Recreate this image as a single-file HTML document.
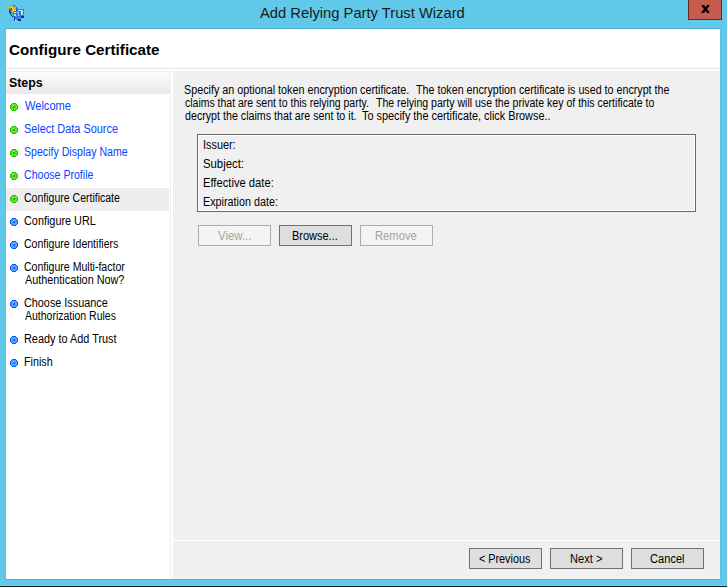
<!DOCTYPE html>
<html><head><meta charset="utf-8">
<style>
*{margin:0;padding:0;box-sizing:border-box}
html,body{width:727px;height:587px;overflow:hidden}
body{position:relative;background:#60c9ea;font-family:"Liberation Sans",sans-serif;font-size:12px;line-height:13px;color:#000}
.a{position:absolute}
.t{position:absolute;white-space:pre;transform-origin:0 0;font-size:12px;line-height:13px}
#title{font-size:15px;line-height:18px;color:#1a1a1a}
#close{left:688px;top:0;width:34px;height:20px;background:#c55c4e;border:1px solid #5e2c25;border-top:none}
#fr_t{left:5px;top:28px;width:716px;height:1px;background:#54b3d4}
#fr_l{left:5px;top:29px;width:1px;height:550px;background:#5bc0e1}
#fr_r{left:720px;top:29px;width:1px;height:550px;background:#5bc0e1}
#fr_b{left:5px;top:579px;width:716px;height:1px;background:#54b3d4}
#client{left:6px;top:29px;width:714px;height:550px;background:#fff}
#hdr{font-size:15px;line-height:18px;font-weight:bold}
#sep{left:6px;top:68px;width:714px;height:1px;background:#e6e6e6}
#steps{left:6px;top:71px;width:165px;height:508px;background:#fff;border-top:1px solid #f0f0f0;border-right:1px solid #efefef}
#stepshdr{left:6px;top:72px;width:164px;height:22px;background:linear-gradient(#fbfbfb,#e9e9e9)}
#stepst{font-size:12.5px;line-height:14px;font-weight:bold}
#content{left:173px;top:71px;width:547px;height:508px;background:#f0f0f0}
#btnsep{left:173px;top:540px;width:547px;height:1px;background:#fff}
.sel{left:6px;top:188px;width:163px;height:23px;background:#eeeeee}
.dot{position:absolute;left:10px;width:8px;height:8px}
.done{color:#0645ff}
#box{left:197px;top:134px;width:499px;height:78px;border:1px solid #6a6a6a;box-shadow:inset 1px 1px 0 #fff,inset -1px -1px 0 #fff;background:#f0f0f0}
.btn{position:absolute;height:21px;width:73px;border:1px solid #707070;background:#dedede}
.dis{border-color:#adadad;background:#f4f4f4}
.dist{color:#a3a3a3}
.foc{border-color:#3c7fb1}
</style></head><body>
<svg width="0" height="0" style="position:absolute"><defs><symbol id="bb" viewBox="0 0 8 8"><rect x="2" y="0" width="1" height="1" fill="#0a58ff"/><rect x="3" y="0" width="1" height="1" fill="#0a58ff"/><rect x="4" y="0" width="1" height="1" fill="#0a58ff"/><rect x="5" y="0" width="1" height="1" fill="#0a58ff"/><rect x="1" y="1" width="1" height="1" fill="#0a58ff"/><rect x="2" y="1" width="1" height="1" fill="#5a9bff"/><rect x="3" y="1" width="1" height="1" fill="#5a9bff"/><rect x="4" y="1" width="1" height="1" fill="#5a9bff"/><rect x="5" y="1" width="1" height="1" fill="#5a9bff"/><rect x="6" y="1" width="1" height="1" fill="#0a58ff"/><rect x="0" y="2" width="1" height="1" fill="#0a58ff"/><rect x="1" y="2" width="1" height="1" fill="#5a9bff"/><rect x="2" y="2" width="1" height="1" fill="#5a9bff"/><rect x="3" y="2" width="1" height="1" fill="#b4d2ff"/><rect x="4" y="2" width="1" height="1" fill="#5a9bff"/><rect x="5" y="2" width="1" height="1" fill="#5a9bff"/><rect x="6" y="2" width="1" height="1" fill="#5a9bff"/><rect x="7" y="2" width="1" height="1" fill="#0a58ff"/><rect x="0" y="3" width="1" height="1" fill="#0a58ff"/><rect x="1" y="3" width="1" height="1" fill="#5a9bff"/><rect x="2" y="3" width="1" height="1" fill="#5a9bff"/><rect x="3" y="3" width="1" height="1" fill="#1a6cff"/><rect x="4" y="3" width="1" height="1" fill="#1a6cff"/><rect x="5" y="3" width="1" height="1" fill="#5a9bff"/><rect x="6" y="3" width="1" height="1" fill="#5a9bff"/><rect x="7" y="3" width="1" height="1" fill="#0a58ff"/><rect x="0" y="4" width="1" height="1" fill="#0a58ff"/><rect x="1" y="4" width="1" height="1" fill="#5a9bff"/><rect x="2" y="4" width="1" height="1" fill="#5a9bff"/><rect x="3" y="4" width="1" height="1" fill="#1a6cff"/><rect x="4" y="4" width="1" height="1" fill="#1a6cff"/><rect x="5" y="4" width="1" height="1" fill="#5a9bff"/><rect x="6" y="4" width="1" height="1" fill="#5a9bff"/><rect x="7" y="4" width="1" height="1" fill="#0a58ff"/><rect x="0" y="5" width="1" height="1" fill="#0a58ff"/><rect x="1" y="5" width="1" height="1" fill="#5a9bff"/><rect x="2" y="5" width="1" height="1" fill="#5a9bff"/><rect x="3" y="5" width="1" height="1" fill="#5a9bff"/><rect x="4" y="5" width="1" height="1" fill="#5a9bff"/><rect x="5" y="5" width="1" height="1" fill="#5a9bff"/><rect x="6" y="5" width="1" height="1" fill="#5a9bff"/><rect x="7" y="5" width="1" height="1" fill="#0a58ff"/><rect x="1" y="6" width="1" height="1" fill="#0a58ff"/><rect x="2" y="6" width="1" height="1" fill="#5a9bff"/><rect x="3" y="6" width="1" height="1" fill="#5a9bff"/><rect x="4" y="6" width="1" height="1" fill="#5a9bff"/><rect x="5" y="6" width="1" height="1" fill="#5a9bff"/><rect x="6" y="6" width="1" height="1" fill="#0a58ff"/><rect x="2" y="7" width="1" height="1" fill="#0a58ff"/><rect x="3" y="7" width="1" height="1" fill="#0a58ff"/><rect x="4" y="7" width="1" height="1" fill="#0a58ff"/><rect x="5" y="7" width="1" height="1" fill="#0a58ff"/></symbol><symbol id="bg" viewBox="0 0 8 8"><rect x="2" y="0" width="1" height="1" fill="#22c300"/><rect x="3" y="0" width="1" height="1" fill="#22c300"/><rect x="4" y="0" width="1" height="1" fill="#22c300"/><rect x="5" y="0" width="1" height="1" fill="#22c300"/><rect x="1" y="1" width="1" height="1" fill="#22c300"/><rect x="2" y="1" width="1" height="1" fill="#62dc30"/><rect x="3" y="1" width="1" height="1" fill="#62dc30"/><rect x="4" y="1" width="1" height="1" fill="#62dc30"/><rect x="5" y="1" width="1" height="1" fill="#62dc30"/><rect x="6" y="1" width="1" height="1" fill="#22c300"/><rect x="0" y="2" width="1" height="1" fill="#22c300"/><rect x="1" y="2" width="1" height="1" fill="#62dc30"/><rect x="2" y="2" width="1" height="1" fill="#62dc30"/><rect x="3" y="2" width="1" height="1" fill="#cfe8c8"/><rect x="4" y="2" width="1" height="1" fill="#62dc30"/><rect x="5" y="2" width="1" height="1" fill="#62dc30"/><rect x="6" y="2" width="1" height="1" fill="#62dc30"/><rect x="7" y="2" width="1" height="1" fill="#22c300"/><rect x="0" y="3" width="1" height="1" fill="#22c300"/><rect x="1" y="3" width="1" height="1" fill="#62dc30"/><rect x="2" y="3" width="1" height="1" fill="#62dc30"/><rect x="3" y="3" width="1" height="1" fill="#26bb00"/><rect x="4" y="3" width="1" height="1" fill="#26bb00"/><rect x="5" y="3" width="1" height="1" fill="#62dc30"/><rect x="6" y="3" width="1" height="1" fill="#62dc30"/><rect x="7" y="3" width="1" height="1" fill="#22c300"/><rect x="0" y="4" width="1" height="1" fill="#22c300"/><rect x="1" y="4" width="1" height="1" fill="#62dc30"/><rect x="2" y="4" width="1" height="1" fill="#62dc30"/><rect x="3" y="4" width="1" height="1" fill="#26bb00"/><rect x="4" y="4" width="1" height="1" fill="#26bb00"/><rect x="5" y="4" width="1" height="1" fill="#62dc30"/><rect x="6" y="4" width="1" height="1" fill="#62dc30"/><rect x="7" y="4" width="1" height="1" fill="#22c300"/><rect x="0" y="5" width="1" height="1" fill="#22c300"/><rect x="1" y="5" width="1" height="1" fill="#62dc30"/><rect x="2" y="5" width="1" height="1" fill="#62dc30"/><rect x="3" y="5" width="1" height="1" fill="#62dc30"/><rect x="4" y="5" width="1" height="1" fill="#62dc30"/><rect x="5" y="5" width="1" height="1" fill="#62dc30"/><rect x="6" y="5" width="1" height="1" fill="#62dc30"/><rect x="7" y="5" width="1" height="1" fill="#22c300"/><rect x="1" y="6" width="1" height="1" fill="#22c300"/><rect x="2" y="6" width="1" height="1" fill="#62dc30"/><rect x="3" y="6" width="1" height="1" fill="#62dc30"/><rect x="4" y="6" width="1" height="1" fill="#62dc30"/><rect x="5" y="6" width="1" height="1" fill="#62dc30"/><rect x="6" y="6" width="1" height="1" fill="#22c300"/><rect x="2" y="7" width="1" height="1" fill="#22c300"/><rect x="3" y="7" width="1" height="1" fill="#22c300"/><rect x="4" y="7" width="1" height="1" fill="#22c300"/><rect x="5" y="7" width="1" height="1" fill="#22c300"/></symbol></defs></svg>
<svg class="a" style="left:6px;top:4px" width="20" height="18" viewBox="0 0 20 18" shape-rendering="crispEdges"><rect x="6" y="1" width="1" height="1" fill="#3d8fc8"/><rect x="7" y="1" width="1" height="1" fill="#3d8fc8"/><rect x="8" y="1" width="1" height="1" fill="#3d8fc8"/><rect x="9" y="1" width="1" height="1" fill="#3d8fc8"/><rect x="2" y="2" width="1" height="1" fill="#f2a51f"/><rect x="3" y="2" width="1" height="1" fill="#f2a51f"/><rect x="4" y="2" width="1" height="1" fill="#f2a51f"/><rect x="5" y="2" width="1" height="1" fill="#f2a51f"/><rect x="6" y="2" width="1" height="1" fill="#f6dc9a"/><rect x="7" y="2" width="1" height="1" fill="#3d8fc8"/><rect x="8" y="2" width="1" height="1" fill="#3d8fc8"/><rect x="9" y="2" width="1" height="1" fill="#f2a51f"/><rect x="2" y="3" width="1" height="1" fill="#f2a51f"/><rect x="3" y="3" width="1" height="1" fill="#f6dc9a"/><rect x="4" y="3" width="1" height="1" fill="#f2a51f"/><rect x="5" y="3" width="1" height="1" fill="#f2a51f"/><rect x="6" y="3" width="1" height="1" fill="#f6dc9a"/><rect x="7" y="3" width="1" height="1" fill="#f2a51f"/><rect x="9" y="3" width="1" height="1" fill="#f2a51f"/><rect x="10" y="3" width="1" height="1" fill="#1b5fd0"/><rect x="2" y="4" width="1" height="1" fill="#f2a51f"/><rect x="3" y="4" width="1" height="1" fill="#2cc42c"/><rect x="4" y="4" width="1" height="1" fill="#2cc42c"/><rect x="5" y="4" width="1" height="1" fill="#1b5fd0"/><rect x="6" y="4" width="1" height="1" fill="#f6dc9a"/><rect x="7" y="4" width="1" height="1" fill="#f2a51f"/><rect x="8" y="4" width="1" height="1" fill="#f2a51f"/><rect x="9" y="4" width="1" height="1" fill="#f2a51f"/><rect x="10" y="4" width="1" height="1" fill="#1b5fd0"/><rect x="11" y="4" width="1" height="1" fill="#2cc42c"/><rect x="2" y="5" width="1" height="1" fill="#f2a51f"/><rect x="3" y="5" width="1" height="1" fill="#1b5fd0"/><rect x="4" y="5" width="1" height="1" fill="#2cc42c"/><rect x="5" y="5" width="1" height="1" fill="#1b5fd0"/><rect x="6" y="5" width="1" height="1" fill="#f2a51f"/><rect x="7" y="5" width="1" height="1" fill="#f6dc9a"/><rect x="8" y="5" width="1" height="1" fill="#f2a51f"/><rect x="9" y="5" width="1" height="1" fill="#f2a51f"/><rect x="10" y="5" width="1" height="1" fill="#1b5fd0"/><rect x="11" y="5" width="1" height="1" fill="#2a80da"/><rect x="12" y="5" width="1" height="1" fill="#2a80da"/><rect x="13" y="5" width="1" height="1" fill="#2a80da"/><rect x="14" y="5" width="1" height="1" fill="#2a80da"/><rect x="15" y="5" width="1" height="1" fill="#2a80da"/><rect x="16" y="5" width="1" height="1" fill="#2a80da"/><rect x="17" y="5" width="1" height="1" fill="#2a80da"/><rect x="3" y="6" width="1" height="1" fill="#1b5fd0"/><rect x="4" y="6" width="1" height="1" fill="#1b5fd0"/><rect x="5" y="6" width="1" height="1" fill="#1b5fd0"/><rect x="6" y="6" width="1" height="1" fill="#f2a51f"/><rect x="7" y="6" width="1" height="1" fill="#f6dc9a"/><rect x="8" y="6" width="1" height="1" fill="#f2a51f"/><rect x="9" y="6" width="1" height="1" fill="#bcdcff"/><rect x="10" y="6" width="1" height="1" fill="#1b5fd0"/><rect x="11" y="6" width="1" height="1" fill="#2a80da"/><rect x="12" y="6" width="1" height="1" fill="#bcdcff"/><rect x="13" y="6" width="1" height="1" fill="#bcdcff"/><rect x="14" y="6" width="1" height="1" fill="#bcdcff"/><rect x="15" y="6" width="1" height="1" fill="#bcdcff"/><rect x="16" y="6" width="1" height="1" fill="#bcdcff"/><rect x="17" y="6" width="1" height="1" fill="#2a80da"/><rect x="3" y="7" width="1" height="1" fill="#0b2f96"/><rect x="4" y="7" width="1" height="1" fill="#1b5fd0"/><rect x="5" y="7" width="1" height="1" fill="#f2a51f"/><rect x="6" y="7" width="1" height="1" fill="#f2a51f"/><rect x="7" y="7" width="1" height="1" fill="#f2a51f"/><rect x="8" y="7" width="1" height="1" fill="#2a80da"/><rect x="9" y="7" width="1" height="1" fill="#2a80da"/><rect x="10" y="7" width="1" height="1" fill="#2a80da"/><rect x="11" y="7" width="1" height="1" fill="#2a80da"/><rect x="12" y="7" width="1" height="1" fill="#2a80da"/><rect x="13" y="7" width="1" height="1" fill="#2a80da"/><rect x="14" y="7" width="1" height="1" fill="#2a80da"/><rect x="15" y="7" width="1" height="1" fill="#bcdcff"/><rect x="16" y="7" width="1" height="1" fill="#bcdcff"/><rect x="17" y="7" width="1" height="1" fill="#2a80da"/><rect x="3" y="8" width="1" height="1" fill="#0b2f96"/><rect x="4" y="8" width="1" height="1" fill="#1b5fd0"/><rect x="5" y="8" width="1" height="1" fill="#2cc42c"/><rect x="6" y="8" width="1" height="1" fill="#2cc42c"/><rect x="7" y="8" width="1" height="1" fill="#2a80da"/><rect x="8" y="8" width="1" height="1" fill="#bcdcff"/><rect x="9" y="8" width="1" height="1" fill="#bcdcff"/><rect x="10" y="8" width="1" height="1" fill="#2a80da"/><rect x="11" y="8" width="1" height="1" fill="#bcdcff"/><rect x="12" y="8" width="1" height="1" fill="#bcdcff"/><rect x="13" y="8" width="1" height="1" fill="#2a80da"/><rect x="14" y="8" width="1" height="1" fill="#2a80da"/><rect x="15" y="8" width="1" height="1" fill="#bcdcff"/><rect x="16" y="8" width="1" height="1" fill="#bcdcff"/><rect x="17" y="8" width="1" height="1" fill="#2a80da"/><rect x="4" y="9" width="1" height="1" fill="#0b2f96"/><rect x="5" y="9" width="1" height="1" fill="#2cc42c"/><rect x="6" y="9" width="1" height="1" fill="#2cc42c"/><rect x="7" y="9" width="1" height="1" fill="#2a80da"/><rect x="8" y="9" width="1" height="1" fill="#2a80da"/><rect x="9" y="9" width="1" height="1" fill="#2a80da"/><rect x="10" y="9" width="1" height="1" fill="#2a80da"/><rect x="11" y="9" width="1" height="1" fill="#2a80da"/><rect x="12" y="9" width="1" height="1" fill="#2a80da"/><rect x="13" y="9" width="1" height="1" fill="#2a80da"/><rect x="14" y="9" width="1" height="1" fill="#2a80da"/><rect x="15" y="9" width="1" height="1" fill="#bcdcff"/><rect x="16" y="9" width="1" height="1" fill="#bcdcff"/><rect x="17" y="9" width="1" height="1" fill="#2a80da"/><rect x="4" y="10" width="1" height="1" fill="#0b2f96"/><rect x="5" y="10" width="1" height="1" fill="#3ae43a"/><rect x="6" y="10" width="1" height="1" fill="#3ae43a"/><rect x="7" y="10" width="1" height="1" fill="#2a80da"/><rect x="8" y="10" width="1" height="1" fill="#bcdcff"/><rect x="9" y="10" width="1" height="1" fill="#bcdcff"/><rect x="10" y="10" width="1" height="1" fill="#2a80da"/><rect x="11" y="10" width="1" height="1" fill="#2a80da"/><rect x="12" y="10" width="1" height="1" fill="#bcdcff"/><rect x="13" y="10" width="1" height="1" fill="#2a80da"/><rect x="14" y="10" width="1" height="1" fill="#2a80da"/><rect x="15" y="10" width="1" height="1" fill="#bcdcff"/><rect x="16" y="10" width="1" height="1" fill="#bcdcff"/><rect x="17" y="10" width="1" height="1" fill="#2a80da"/><rect x="5" y="11" width="1" height="1" fill="#0b2f96"/><rect x="6" y="11" width="1" height="1" fill="#3ae43a"/><rect x="7" y="11" width="1" height="1" fill="#2a80da"/><rect x="8" y="11" width="1" height="1" fill="#bcdcff"/><rect x="9" y="11" width="1" height="1" fill="#bcdcff"/><rect x="10" y="11" width="1" height="1" fill="#2a80da"/><rect x="11" y="11" width="1" height="1" fill="#2a80da"/><rect x="12" y="11" width="1" height="1" fill="#bcdcff"/><rect x="13" y="11" width="1" height="1" fill="#2a80da"/><rect x="14" y="11" width="1" height="1" fill="#2a80da"/><rect x="15" y="11" width="1" height="1" fill="#2a80da"/><rect x="16" y="11" width="1" height="1" fill="#2a80da"/><rect x="17" y="11" width="1" height="1" fill="#2a80da"/><rect x="6" y="12" width="1" height="1" fill="#0b2f96"/><rect x="7" y="12" width="1" height="1" fill="#2a80da"/><rect x="8" y="12" width="1" height="1" fill="#2a80da"/><rect x="9" y="12" width="1" height="1" fill="#2a80da"/><rect x="10" y="12" width="1" height="1" fill="#2a80da"/><rect x="11" y="12" width="1" height="1" fill="#2a80da"/><rect x="12" y="12" width="1" height="1" fill="#2a80da"/><rect x="13" y="12" width="1" height="1" fill="#2a80da"/><rect x="14" y="12" width="1" height="1" fill="#2a80da"/><rect x="15" y="12" width="1" height="1" fill="#0a2c9e"/><rect x="16" y="12" width="1" height="1" fill="#0a2c9e"/><rect x="17" y="12" width="1" height="1" fill="#0a2c9e"/><rect x="8" y="13" width="1" height="1" fill="#0a2c9e"/><rect x="9" y="13" width="1" height="1" fill="#2a80da"/><rect x="10" y="13" width="1" height="1" fill="#2a80da"/><rect x="11" y="13" width="1" height="1" fill="#2a80da"/><rect x="12" y="13" width="1" height="1" fill="#2a80da"/><rect x="13" y="13" width="1" height="1" fill="#2a80da"/><rect x="14" y="13" width="1" height="1" fill="#2a80da"/><rect x="15" y="13" width="1" height="1" fill="#0a2c9e"/><rect x="16" y="13" width="1" height="1" fill="#0a2c9e"/><rect x="17" y="13" width="1" height="1" fill="#0a2c9e"/><rect x="8" y="14" width="1" height="1" fill="#0a2c9e"/><rect x="9" y="14" width="1" height="1" fill="#2a80da"/><rect x="10" y="14" width="1" height="1" fill="#2a80da"/><rect x="11" y="14" width="1" height="1" fill="#2a80da"/><rect x="12" y="14" width="1" height="1" fill="#2a80da"/><rect x="13" y="14" width="1" height="1" fill="#2a80da"/><rect x="8" y="15" width="1" height="1" fill="#0a2c9e"/><rect x="9" y="15" width="1" height="1" fill="#bcdcff"/><rect x="10" y="15" width="1" height="1" fill="#2a80da"/><rect x="11" y="15" width="1" height="1" fill="#2a80da"/><rect x="12" y="15" width="1" height="1" fill="#0a2c9e"/><rect x="13" y="15" width="1" height="1" fill="#0a2c9e"/><rect x="14" y="15" width="1" height="1" fill="#0a2c9e"/><rect x="8" y="16" width="1" height="1" fill="#0a2c9e"/><rect x="9" y="16" width="1" height="1" fill="#bcdcff"/><rect x="10" y="16" width="1" height="1" fill="#bcdcff"/><rect x="11" y="16" width="1" height="1" fill="#2a80da"/><rect x="12" y="16" width="1" height="1" fill="#0a2c9e"/><rect x="13" y="16" width="1" height="1" fill="#0a2c9e"/><rect x="14" y="16" width="1" height="1" fill="#0a2c9e"/></svg>
<div class="t" id="title" style="left:260.2px;top:4px;transform:scaleX(0.9826);">Add Relying Party Trust Wizard</div>
<div class="a" id="close"><svg style="position:absolute;left:12px;top:5px" width="9" height="8" viewBox="0 0 9 8"><path d="M0 0 H3.1 L4.5 2.3 L5.9 0 H9 L6.1 4 L9 8 H5.9 L4.5 5.7 L3.1 8 H0 L2.9 4 Z" fill="#000"/></svg></div>
<div class="a" id="client"></div>
<div class="a" id="fr_t"></div>
<div class="a" id="fr_l"></div>
<div class="a" id="fr_r"></div>
<div class="a" id="fr_b"></div>
<div class="a" id="sep"></div>
<div class="a" id="steps"></div>
<div class="a" id="stepshdr"></div>
<div class="a" id="content"></div>
<div class="a" id="btnsep"></div>
<div class="t" id="hdr" style="left:8.98px;top:41px;transform:scaleX(1.0151);">Configure Certificate</div>
<div class="t" id="stepst" style="left:8.8px;top:76px;transform:scaleX(0.9875);">Steps</div>
<div class="a sel"></div>
<svg class="dot" style="top:103px" width="8" height="8" shape-rendering="crispEdges"><use href="#bg"/></svg>
<div class="t done" style="left:25.1px;top:100px;transform:scaleX(0.9229);">Welcome</div>
<svg class="dot" style="top:126px" width="8" height="8" shape-rendering="crispEdges"><use href="#bg"/></svg>
<div class="t done" style="left:24.29px;top:123px;transform:scaleX(0.9089);">Select Data Source</div>
<svg class="dot" style="top:149px" width="8" height="8" shape-rendering="crispEdges"><use href="#bg"/></svg>
<div class="t done" style="left:24.32px;top:146px;transform:scaleX(0.8835);">Specify Display Name</div>
<svg class="dot" style="top:172px" width="8" height="8" shape-rendering="crispEdges"><use href="#bg"/></svg>
<div class="t done" style="left:24.12px;top:169px;transform:scaleX(0.8816);">Choose Profile</div>
<svg class="dot" style="top:195px" width="8" height="8" shape-rendering="crispEdges"><use href="#bg"/></svg>
<div class="t " style="left:24.12px;top:192px;transform:scaleX(0.8766);">Configure Certificate</div>
<svg class="dot" style="top:218px" width="8" height="8" shape-rendering="crispEdges"><use href="#bb"/></svg>
<div class="t " style="left:24.09px;top:215px;transform:scaleX(0.9052);">Configure URL</div>
<svg class="dot" style="top:241px" width="8" height="8" shape-rendering="crispEdges"><use href="#bb"/></svg>
<div class="t " style="left:24.12px;top:238px;transform:scaleX(0.8781);">Configure Identifiers</div>
<svg class="dot" style="top:264px" width="8" height="8" shape-rendering="crispEdges"><use href="#bb"/></svg>
<div class="t " style="left:24.12px;top:261px;transform:scaleX(0.8788);">Configure Multi-factor</div>
<div class="t " style="left:25.0px;top:274px;transform:scaleX(0.9028);">Authentication Now?</div>
<svg class="dot" style="top:300px" width="8" height="8" shape-rendering="crispEdges"><use href="#bb"/></svg>
<div class="t " style="left:24.1px;top:297px;transform:scaleX(0.9022);">Choose Issuance</div>
<div class="t " style="left:25.0px;top:310px;transform:scaleX(0.8738);">Authorization Rules</div>
<svg class="dot" style="top:336px" width="8" height="8" shape-rendering="crispEdges"><use href="#bb"/></svg>
<div class="t " style="left:24.09px;top:333px;transform:scaleX(0.907);">Ready to Add Trust</div>
<svg class="dot" style="top:359px" width="8" height="8" shape-rendering="crispEdges"><use href="#bb"/></svg>
<div class="t " style="left:24.11px;top:356px;transform:scaleX(0.8931);">Finish</div>
<div class="t " style="left:184.2px;top:84px;transform:scaleX(0.898);">Specify an optional token encryption certificate.</div>
<div class="t " style="left:415.8px;top:84px;transform:scaleX(0.8919);">The token encryption certificate is used to encrypt the</div>
<div class="t " style="left:185.0px;top:97px;transform:scaleX(0.8737);">claims that are sent to this relying party.</div>
<div class="t " style="left:376.4px;top:97px;transform:scaleX(0.8785);">The relying party will use the private key of this certificate to</div>
<div class="t " style="left:185.0px;top:110px;transform:scaleX(0.8901);">decrypt the claims that are sent to it.</div>
<div class="t " style="left:361.6px;top:110px;transform:scaleX(0.9058);">To specify the certificate, click Browse..</div>
<div class="a" id="box"></div>
<div class="t " style="left:203.49px;top:139px;transform:scaleX(0.9061);">Issuer:</div>
<div class="t " style="left:203.46px;top:158px;transform:scaleX(0.945);">Subject:</div>
<div class="t " style="left:203.47px;top:177px;transform:scaleX(0.9329);">Effective date:</div>
<div class="t " style="left:203.1px;top:196px;transform:scaleX(0.8988);">Expiration date:</div>
<div class="btn dis" style="left:198px;top:225px"></div>
<div class="btn foc" style="left:279px;top:225px"></div>
<div class="btn dis" style="left:360px;top:225px"></div>
<div class="t dist" style="left:217.9px;top:230px;transform:scaleX(0.9515);">View...</div>
<div class="t " style="left:292.49px;top:230px;transform:scaleX(0.9149);">Browse...</div>
<div class="t dist" style="left:375.06px;top:230px;transform:scaleX(0.9357);">Remove</div>
<div class="btn" style="left:469px;top:548px"></div>
<div class="btn" style="left:550px;top:548px"></div>
<div class="btn" style="left:631px;top:548px"></div>
<div class="t " style="left:479.1px;top:553px;transform:scaleX(0.9);">&lt; Previous</div>
<div class="t " style="left:570.48px;top:553px;transform:scaleX(0.9242);">Next &gt;</div>
<div class="t " style="left:649.67px;top:553px;transform:scaleX(0.9257);">Cancel</div>
<div class="a" style="left:0;top:585px;width:727px;height:1px;background:#70d2f2"></div>
<div class="a" style="left:0;top:586px;width:727px;height:1px;background:#1a1a1a"></div>
</body></html>
